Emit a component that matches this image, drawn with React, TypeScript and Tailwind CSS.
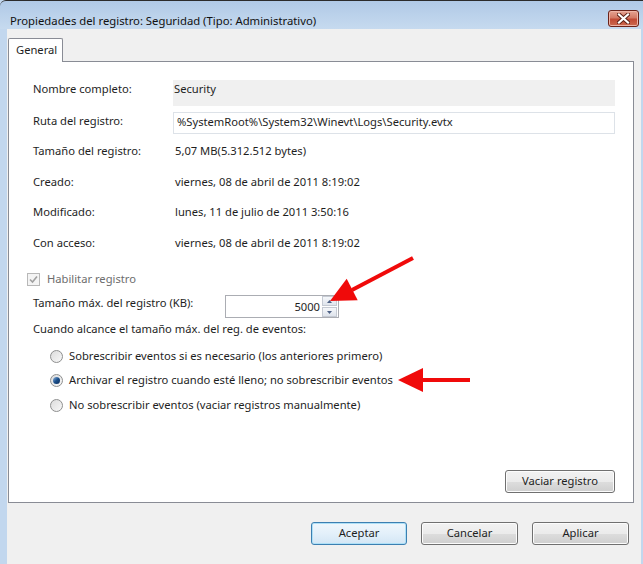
import React from 'react';

const font = { fontFamily: '"Noto Sans", "Open Sans", sans-serif' };

function WinButton({ label, isDefault = false, w = 'w-[96px]' }: { label: string; isDefault?: boolean; w?: string }) {
    return (
        <div
            className={`${w} h-[23px] rounded-[3px] border flex items-center justify-center text-[#1e1e1e] ${
                isDefault
                    ? 'border-[#3c7fb1] shadow-[inset_0_0_0_1px_#aee0f7] bg-gradient-to-b from-[#f0f7fc] via-[#e3f0fa] to-[#d3e6f5]'
                    : 'border-[#707070] shadow-[inset_0_0_0_1px_#fcfcfc] bg-[linear-gradient(to_bottom,#f2f2f2_0%,#ebebeb_50%,#dddddd_51%,#cfcfcf_100%)]'
            }`}
        >
            {label}
        </div>
    );
}

function Radio({ checked = false }: { checked?: boolean }) {
    return (
        <div className="w-[13px] h-[13px] rounded-full border border-[#8e8f8f] bg-gradient-to-br from-[#dcdcdc] to-[#f8f8f8] flex items-center justify-center shrink-0">
            {checked && <div className="w-[7px] h-[7px] rounded-full bg-gradient-to-br from-[#8fb6e0] via-[#1a4f8a] to-[#0d2f5e]" />}
        </div>
    );
}

function Row({ label, value, mt }: { label: string; value: string; mt: string }) {
    return (
        <div className={`flex leading-[18px] ${mt}`}>
            <div className="w-[140px] shrink-0">{label}</div>
            <div className="pl-[2px]">{value}</div>
        </div>
    );
}

export default function App() {
    return (
        <div className="w-[643px] h-[564px] relative overflow-hidden bg-[#c2d7ee] text-[11.2px] text-[#1e1e1e]" style={font}>
            {/* title bar */}
            <div className="h-[29px] flex items-start border-t border-[#2b2b2b] rounded-tl-[6px] bg-gradient-to-b from-[#b0c9e6] to-[#c6daef]">
                <div className="pl-[10px] pt-[10px] text-[11.3px] text-[#111] leading-[20px]">
                    Propiedades del registro: Seguridad (Tipo: Administrativo)
                </div>
                <div className="ml-auto mr-[4px] mt-[9px] w-[31px] h-[17px] rounded-[3px] border border-[#6b2219] bg-[linear-gradient(to_bottom,#e6a392_0%,#d47a66_45%,#c14a35_55%,#cc6a4f_100%)] shadow-[inset_0_0_0_1px_#eeb4a6] flex items-center justify-center">
                    <svg width="13" height="11" viewBox="0 0 13 11">
                        <path d="M2 1.5 L11 9.5 M11 1.5 L2 9.5" stroke="#5a1e14" strokeWidth="4" strokeLinecap="square" />
                        <path d="M2 1.5 L11 9.5 M11 1.5 L2 9.5" stroke="#ffffff" strokeWidth="2.2" strokeLinecap="square" />
                    </svg>
                </div>
            </div>

            {/* body */}
            <div className="flex pl-[7px] pr-[2px]">
                <div className="flex-1 h-[535px] bg-[#f0f0f0] pl-[1px] pr-[7px] pt-[9px]">
                    {/* tab */}
                    <div className="relative z-10 -mb-px w-[55px] h-[24px] border border-b-0 border-[#898c95] rounded-t-[2px] bg-white pl-[7px] leading-[21px]">
                        General
                    </div>
                    {/* panel */}
                    <div className="h-[442px] border border-[#898c95] bg-white flex flex-col px-[18px] pb-[9px]">
                        <div className="pl-[6px]">
                            <div className="flex pt-[18px] leading-[18px]">
                                <div className="w-[140px] shrink-0">Nombre completo:</div>
                                <div className="flex-1 h-[26px] bg-[#f0f0f0] pl-[1px]">Security</div>
                            </div>
                            <div className="flex mt-[6px] leading-[18px]">
                                <div className="w-[140px] shrink-0">Ruta del registro:</div>
                                <div className="flex-1 h-[22px] border border-[#dde2e8] pl-[3px]">
                                    %SystemRoot%\System32\Winevt\Logs\Security.evtx
                                </div>
                            </div>
                            <Row mt="mt-[8px]" label="Tamaño del registro:" value="5,07 MB(5.312.512 bytes)" />
                            <Row mt="mt-[13px]" label="Creado:" value="viernes, 08 de abril de 2011 8:19:02" />
                            <Row mt="mt-[12px]" label="Modificado:" value="lunes, 11 de julio de 2011 3:50:16" />
                            <Row mt="mt-[13px]" label="Con acceso:" value="viernes, 08 de abril de 2011 8:19:02" />
                        </div>

                        <div className="flex items-center mt-[18px] leading-[18px] text-[#6d6d6d]">
                            <div className="w-[13px] h-[13px] border border-[#b8b8b8] bg-[#f4f4f4] flex items-center justify-center">
                                <svg width="9" height="9" viewBox="0 0 9 9">
                                    <path d="M1 4.5 L3.5 7 L8 1.5" stroke="#a0a0a0" strokeWidth="1.6" fill="none" />
                                </svg>
                            </div>
                            <span className="ml-[7px]">Habilitar registro</span>
                        </div>

                        <div className="pl-[6px]">
                            <div className="flex items-start mt-[6px] leading-[18px]">
                                <div className="w-[192px] shrink-0">Tamaño máx. del registro (KB):</div>
                                <div className="mt-[1px] w-[114px] h-[23px] border border-[#abadb3] flex items-center">
                                    <div className="flex-1 text-right pr-[2px]">5000</div>
                                    <div className="w-[16px] h-[21px] flex flex-col gap-px pr-px">
                                        <div className="flex-1 border border-[#c5cad3] bg-gradient-to-b from-[#f5f7fa] to-[#dfe4ec] flex items-center justify-center">
                                            <svg width="5" height="3" viewBox="0 0 5 3"><path d="M0 3 L2.5 0 L5 3 Z" fill="#4d6185" /></svg>
                                        </div>
                                        <div className="flex-1 border border-[#c5cad3] bg-gradient-to-b from-[#f5f7fa] to-[#dfe4ec] flex items-center justify-center">
                                            <svg width="5" height="3" viewBox="0 0 5 3"><path d="M0 0 L2.5 3 L5 0 Z" fill="#4d6185" /></svg>
                                        </div>
                                    </div>
                                </div>
                            </div>
                            <div className="mt-[2px] leading-[18px]">Cuando alcance el tamaño máx. del reg. de eventos:</div>
                            <div className="pl-[17px] flex flex-col gap-[6px] mt-[9px] leading-[18px]">
                                <div className="flex items-center gap-[6px]">
                                    <Radio />
                                    <span>Sobrescribir eventos si es necesario (los anteriores primero)</span>
                                </div>
                                <div className="flex items-center gap-[6px]">
                                    <Radio checked />
                                    <span>Archivar el registro cuando esté lleno; no sobrescribir eventos</span>
                                </div>
                                <div className="flex items-center gap-[6px] mt-px">
                                    <Radio />
                                    <span>No sobrescribir eventos (vaciar registros manualmente)</span>
                                </div>
                            </div>
                        </div>

                        <div className="mt-auto flex justify-end">
                            <WinButton label="Vaciar registro" w="w-[110px]" />
                        </div>
                    </div>

                    {/* dialog buttons */}
                    <div className="mt-[19px] flex justify-end gap-[14px] pr-[5px]">
                        <WinButton label="Aceptar" isDefault w="w-[96px]" />
                        <WinButton label="Cancelar" w="w-[97px]" />
                        <WinButton label="Aplicar" w="w-[97px]" />
                    </div>
                </div>
            </div>

            {/* red annotation arrows */}
            <svg className="absolute inset-0 pointer-events-none" width="643" height="564" viewBox="0 0 643 564">
                <line x1="413" y1="258" x2="352" y2="290" stroke="#f00a0a" strokeWidth="4" />
                <path d="M330 301 L346.7 278.8 L357.7 300.2 Z" fill="#f00a0a" />
                <line x1="470" y1="380" x2="420" y2="380" stroke="#f00a0a" strokeWidth="4" />
                <path d="M398 380 L423 368 L423 392 Z" fill="#f00a0a" />
            </svg>
        </div>
    );
}
